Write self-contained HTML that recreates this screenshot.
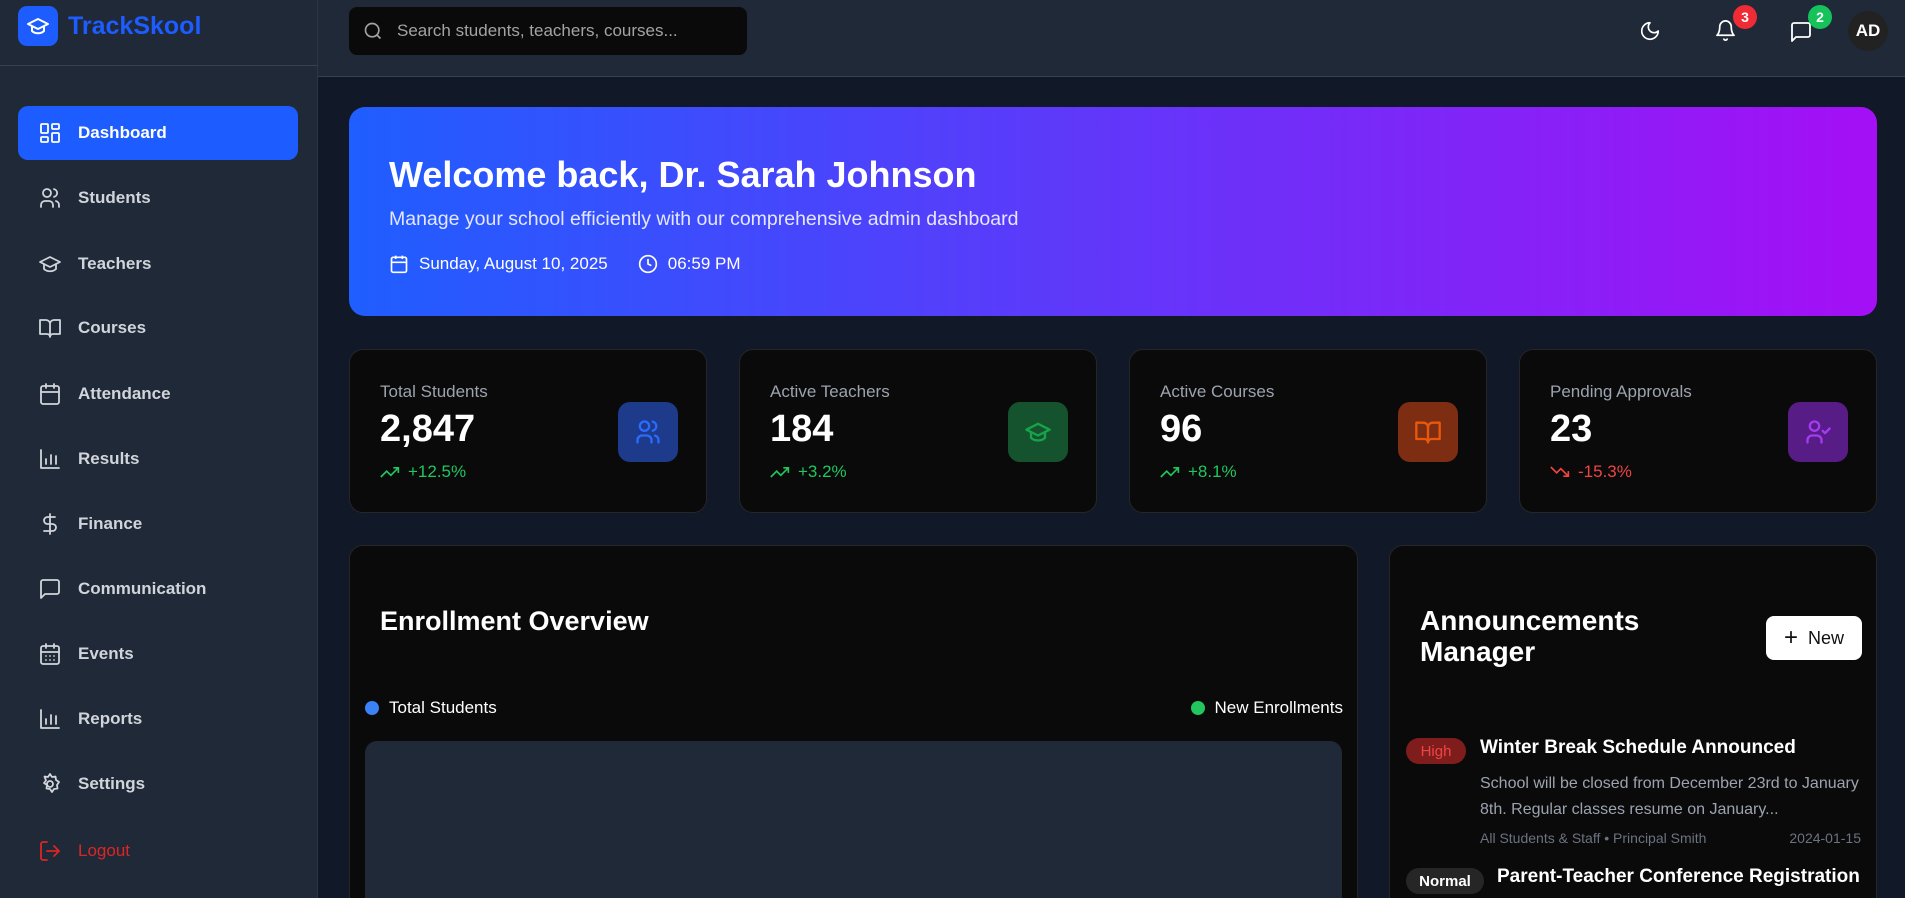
<!DOCTYPE html>
<html><head><meta charset="utf-8"><style>
*{box-sizing:border-box;margin:0;padding:0}
html,body{width:1905px;height:898px;overflow:hidden}
body{background:#111827;font-family:"Liberation Sans",sans-serif;color:#fff;position:relative}
#root{position:absolute;left:0;top:0;width:1905px;height:898px;overflow:hidden}
.sb{position:absolute;left:0;top:0;width:318px;height:898px;background:#1f2937;border-right:1px solid #2b3544}
.logo{position:absolute;left:18px;top:6px;width:40px;height:40px;border-radius:9px;background:#1d5cff;display:flex;align-items:center;justify-content:center}
.brand{position:absolute;left:68px;top:12px;font-size:25px;font-weight:bold;color:#1d5cff}
.sbline{position:absolute;left:0;top:65px;width:318px;height:1px;background:#334155}
.nav{position:absolute;left:18px;width:280px;height:54px;border-radius:10px;display:flex;align-items:center;padding-left:20px;font-size:17px;font-weight:bold;color:#d1d5db}
.nav svg{width:24px;height:24px;margin-right:16px;fill:none;stroke:currentColor;stroke-width:1.8;stroke-linecap:round;stroke-linejoin:round}
.nav.act{background:#1d5cff;color:#fff}
.hdr{position:absolute;left:318px;top:0;right:0;height:77px;background:#1f2937;border-bottom:1px solid #334155}
.search{position:absolute;left:349px;top:7px;width:398px;height:48px;background:#0a0a0a;border-radius:8px;display:flex;align-items:center;padding-left:14px;color:#a3a3a3;font-size:17px}
.ic{position:absolute;fill:none;stroke:#fff;stroke-width:1.8;stroke-linecap:round;stroke-linejoin:round}
.badge{position:absolute;width:24px;height:24px;border-radius:50%;font-size:14px;font-weight:bold;display:flex;align-items:center;justify-content:center}
.banner{position:absolute;left:349px;top:107px;width:1528px;height:209px;border-radius:16px;background:linear-gradient(90deg,#1f5eff,#a50ff5)}
.card{position:absolute;background:#0a0a0a;border:1px solid #262626;border-radius:14px;overflow:hidden}
.lbl{position:absolute;left:30px;top:32px;font-size:17px;color:#9ca3af}
.val{position:absolute;left:30px;top:58px;font-size:38px;font-weight:bold}
.tr{position:absolute;left:30px;top:112px;font-size:17px;display:flex;align-items:center;gap:8px}
.ibox{position:absolute;left:268px;top:52px;width:60px;height:60px;border-radius:12px;display:flex;align-items:center;justify-content:center}
.ibox svg{width:28px;height:28px;fill:none;stroke-width:2;stroke-linecap:round;stroke-linejoin:round}
</style></head><body><div id="root">
<div class="sb">
<div class="logo"><svg width="24" height="24" viewBox="0 0 24 24" fill="none" stroke="#fff" stroke-width="2" stroke-linejoin="round"><path d="M2 10l10-5 10 5-10 5z"/><path d="M6 12v5c3 3 9 3 12 0v-5"/></svg></div>
<div class="brand">TrackSkool</div>
<div class="sbline"></div>
<div class="nav act" style="top:106px"><svg viewBox="0 0 24 24"><rect x="3" y="3" width="7" height="9" rx="1"/><rect x="14" y="3" width="7" height="5" rx="1"/><rect x="14" y="12" width="7" height="9" rx="1"/><rect x="3" y="16" width="7" height="5" rx="1"/></svg>Dashboard</div>
<div class="nav" style="top:171px"><svg viewBox="0 0 24 24"><circle cx="9" cy="7" r="4"/><path d="M3 21v-2a4 4 0 014-4h4a4 4 0 014 4v2M16 3.1a4 4 0 010 7.8M21 21v-2a4 4 0 00-3-3.9"/></svg>Students</div>
<div class="nav" style="top:237px"><svg viewBox="0 0 24 24"><path d="M2 10l10-5 10 5-10 5z"/><path d="M6 12v5c3 3 9 3 12 0v-5"/></svg>Teachers</div>
<div class="nav" style="top:301px"><svg viewBox="0 0 24 24"><path d="M2 4h6a4 4 0 014 4v13a3 3 0 00-3-3H2zM22 4h-6a4 4 0 00-4 4v13a3 3 0 013-3h7z"/></svg>Courses</div>
<div class="nav" style="top:367px"><svg viewBox="0 0 24 24"><rect x="3" y="4" width="18" height="18" rx="2"/><path d="M16 2v4M8 2v4M3 10h18"/></svg>Attendance</div>
<div class="nav" style="top:432px"><svg viewBox="0 0 24 24"><path d="M3 3v18h18M8 17v-5M13 17V8M18 17v-8"/></svg>Results</div>
<div class="nav" style="top:497px"><svg viewBox="0 0 24 24"><path d="M12 2v20M17 5H9.5a3.5 3.5 0 000 7h5a3.5 3.5 0 010 7H6"/></svg>Finance</div>
<div class="nav" style="top:562px"><svg viewBox="0 0 24 24"><path d="M21 15a2 2 0 01-2 2H7l-4 4V5a2 2 0 012-2h14a2 2 0 012 2z"/></svg>Communication</div>
<div class="nav" style="top:627px"><svg viewBox="0 0 24 24"><rect x="3" y="4" width="18" height="18" rx="2"/><path d="M16 2v4M8 2v4M3 10h18M8 14h.01M12 14h.01M16 14h.01M8 18h.01M12 18h.01M16 18h.01"/></svg>Events</div>
<div class="nav" style="top:692px"><svg viewBox="0 0 24 24"><path d="M3 3v18h18M8 17v-5M13 17V8M18 17v-8"/></svg>Reports</div>
<div class="nav" style="top:757px"><svg viewBox="0 0 24 24"><circle cx="12" cy="12" r="3"/><path d="M12 2l2 3 3.5-.5.5 3.5 3 2-2 3 .5 3.5-3.5.5-2 3-2-3-3.5-.5.5-3.5-3-2 2-2.5L6.5 4.5 10 5z"/></svg>Settings</div>
<div class="nav" style="top:824px;color:#dc2626;font-weight:normal"><svg viewBox="0 0 24 24"><path d="M9 21H5a2 2 0 01-2-2V5a2 2 0 012-2h4M16 17l5-5-5-5M21 12H9"/></svg>Logout</div>
</div>
<div class="hdr"></div>
<div class="search"><svg width="20" height="20" viewBox="0 0 24 24" fill="none" stroke="#a3a3a3" stroke-width="2"><circle cx="11" cy="11" r="8"/><path d="M21 21l-4.3-4.3"/></svg><span style="margin-left:14px">Search students, teachers, courses...</span></div>
<svg class="ic" style="left:1639px;top:20px" width="22" height="22" viewBox="0 0 24 24"><path d="M12 3a6 6 0 009 9 9 9 0 11-9-9z"/></svg>
<svg class="ic" style="left:1714px;top:19px" width="23" height="23" viewBox="0 0 24 24"><path d="M6 8a6 6 0 0112 0c0 7 3 9 3 9H3s3-2 3-9M10.3 21a1.9 1.9 0 003.4 0"/></svg>
<div class="badge" style="left:1733px;top:5px;background:#ef2b36">3</div>
<svg class="ic" style="left:1789px;top:20px" width="24" height="24" viewBox="0 0 24 24"><path d="M21 15a2 2 0 01-2 2H7l-4 4V5a2 2 0 012-2h14a2 2 0 012 2z"/></svg>
<div class="badge" style="left:1808px;top:5px;background:#16c25a">2</div>
<div style="position:absolute;left:1848px;top:11px;width:40px;height:40px;border-radius:50%;background:#222;display:flex;align-items:center;justify-content:center;font-weight:bold;font-size:17px">AD</div>

<div class="banner">
<div style="position:absolute;left:40px;top:47px;font-size:36px;font-weight:bold">Welcome back, Dr. Sarah Johnson</div>
<div style="position:absolute;left:40px;top:101px;font-size:19.5px;color:#e5e7ff">Manage your school efficiently with our comprehensive admin dashboard</div>
<div style="position:absolute;left:40px;top:147px;font-size:17px;display:flex;align-items:center">
<svg width="20" height="20" viewBox="0 0 24 24" fill="none" stroke="#fff" stroke-width="2"><rect x="3" y="4" width="18" height="18" rx="2"/><path d="M16 2v4M8 2v4M3 10h18"/></svg><span style="margin-left:10px">Sunday, August 10, 2025</span>
<svg style="margin-left:30px" width="20" height="20" viewBox="0 0 24 24" fill="none" stroke="#fff" stroke-width="2"><circle cx="12" cy="12" r="10"/><path d="M12 6v6l4 2"/></svg><span style="margin-left:10px">06:59 PM</span></div>
</div>

<div class="card" style="left:349px;top:349px;width:358px;height:164px"><div class="lbl">Total Students</div><div class="val">2,847</div><div class="tr" style="color:#22c55e"><svg width="20" height="14" viewBox="0 0 24 16" fill="none" stroke="#22c55e" stroke-width="2"><path d="M1 14l7-7 5 5 9-9M16 3h6v6"/></svg>+12.5%</div><div class="ibox" style="background:#1e3a8a"><svg viewBox="0 0 24 24" stroke="#2b6bff"><circle cx="9" cy="7" r="4"/><path d="M3 21v-2a4 4 0 014-4h4a4 4 0 014 4v2M16 3.1a4 4 0 010 7.8M21 21v-2a4 4 0 00-3-3.9"/></svg></div></div>
<div class="card" style="left:739px;top:349px;width:358px;height:164px"><div class="lbl">Active Teachers</div><div class="val">184</div><div class="tr" style="color:#22c55e"><svg width="20" height="14" viewBox="0 0 24 16" fill="none" stroke="#22c55e" stroke-width="2"><path d="M1 14l7-7 5 5 9-9M16 3h6v6"/></svg>+3.2%</div><div class="ibox" style="background:#14532d"><svg viewBox="0 0 24 24" stroke="#16a34a"><path d="M2 10l10-5 10 5-10 5z"/><path d="M6 12v5c3 3 9 3 12 0v-5"/></svg></div></div>
<div class="card" style="left:1129px;top:349px;width:358px;height:164px"><div class="lbl">Active Courses</div><div class="val">96</div><div class="tr" style="color:#22c55e"><svg width="20" height="14" viewBox="0 0 24 16" fill="none" stroke="#22c55e" stroke-width="2"><path d="M1 14l7-7 5 5 9-9M16 3h6v6"/></svg>+8.1%</div><div class="ibox" style="background:#7c2d12"><svg viewBox="0 0 24 24" stroke="#ea580c"><path d="M2 4h6a4 4 0 014 4v13a3 3 0 00-3-3H2zM22 4h-6a4 4 0 00-4 4v13a3 3 0 013-3h7z"/></svg></div></div>
<div class="card" style="left:1519px;top:349px;width:358px;height:164px"><div class="lbl">Pending Approvals</div><div class="val">23</div><div class="tr" style="color:#ef4444"><svg width="20" height="14" viewBox="0 0 24 16" fill="none" stroke="#ef4444" stroke-width="2"><path d="M1 2l7 7 5-5 9 9M16 13h6V7"/></svg>-15.3%</div><div class="ibox" style="background:#581c87"><svg viewBox="0 0 24 24" stroke="#a33cf0"><circle cx="9" cy="7" r="4"/><path d="M3 21v-2a4 4 0 014-4h4a4 4 0 014 4v2M16 11l2 2 4-4"/></svg></div></div>

<div class="card" style="left:349px;top:545px;width:1009px;height:380px">
<div style="position:absolute;left:30px;top:60px;font-size:27px;font-weight:bold">Enrollment Overview</div>
<div style="position:absolute;left:15px;top:152px;font-size:17px;display:flex;align-items:center"><span style="width:14px;height:14px;border-radius:50%;background:#3b82f6;margin-right:10px"></span>Total Students</div>
<div style="position:absolute;right:14px;top:152px;font-size:17px;display:flex;align-items:center"><span style="width:14px;height:14px;border-radius:50%;background:#22c55e;margin-right:10px"></span>New Enrollments</div>
<div style="position:absolute;left:15px;top:195px;width:977px;height:200px;background:#1f2937;border-radius:12px"></div>
</div>

<div class="card" style="left:1389px;top:545px;width:488px;height:380px">
<div style="position:absolute;left:30px;top:59px;font-size:28px;font-weight:bold;line-height:31px">Announcements<br>Manager</div>
<div style="position:absolute;left:376px;top:70px;width:96px;height:44px;background:#fff;border-radius:8px;color:#111;font-size:18px;display:flex;align-items:center;justify-content:center"><span style="font-size:24px;margin-right:10px;font-weight:300">+</span>New</div>
<div style="position:absolute;left:16px;top:192px;width:60px;height:26px;border-radius:13px;background:#7f1d1d;color:#ef4444;font-size:15px;display:flex;align-items:center;justify-content:center">High</div>
<div style="position:absolute;left:90px;top:191px;font-size:19px;font-weight:bold">Winter Break Schedule Announced</div>
<div style="position:absolute;left:90px;top:225px;width:390px;font-size:16px;line-height:26px;color:#9ca3af">School will be closed from December 23rd to January 8th. Regular classes resume on January...</div>
<div style="position:absolute;left:90px;top:284px;font-size:14px;color:#6b7280">All Students &amp; Staff • Principal Smith</div>
<div style="position:absolute;right:15px;top:284px;font-size:14px;color:#6b7280">2024-01-15</div>
<div style="position:absolute;left:16px;top:322px;width:78px;height:26px;border-radius:13px;background:#262626;font-size:15px;font-weight:bold;display:flex;align-items:center;justify-content:center">Normal</div>
<div style="position:absolute;left:107px;top:320px;font-size:19px;font-weight:bold">Parent-Teacher Conference Registration</div>
</div>
</div></body></html>
